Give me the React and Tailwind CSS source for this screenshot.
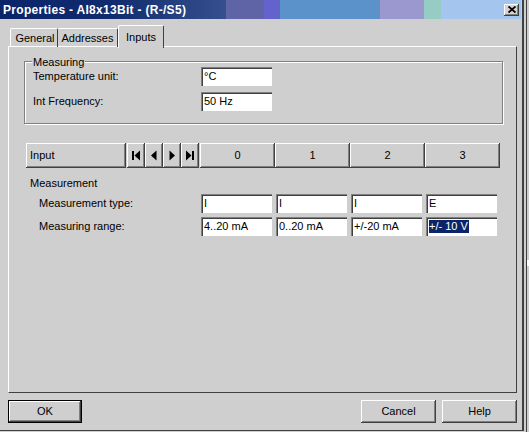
const raised =
  "shadow-[inset_-1px_-1px_#404040,inset_1px_1px_#ffffff,inset_-2px_-2px_#808080]";
const sunken =
  "shadow-[inset_1px_1px_#808080,inset_2px_2px_#404040,inset_-1px_-1px_#ffffff]";

function Field({ value, w = "w-[71px]", selected }) {
  return (
    <div className={`${w} h-[19px] bg-white ${sunken} flex items-center pl-[3px] text-black`}>
      {selected ? (
        <span className="bg-[#0a246a] text-white leading-[13px] pr-[1px]">{value}</span>
      ) : (
        value
      )}
    </div>
  );
}

function NavIcon({ kind }) {
  return (
    <svg width="10" height="11" viewBox="0 0 10 11">
      {kind === "first" && (
        <>
          <rect x="1" y="1" width="2" height="9" fill="#000" />
          <polygon points="9,0.5 3.5,5.5 9,10.5" fill="#000" />
        </>
      )}
      {kind === "prev" && <polygon points="7.5,0.5 2,5.5 7.5,10.5" fill="#000" />}
      {kind === "next" && <polygon points="2.5,0.5 8,5.5 2.5,10.5" fill="#000" />}
      {kind === "last" && (
        <>
          <polygon points="1,0.5 6.5,5.5 1,10.5" fill="#000" />
          <rect x="7" y="1" width="2" height="9" fill="#000" />
        </>
      )}
    </svg>
  );
}

function Button({ label, w = "w-[75px]", def }) {
  return (
    <div
      className={`${w} h-[23px] flex items-center justify-center text-black ${
        def ? "border border-black" : ""
      }`}
    >
      <div className={`w-full h-full flex items-center justify-center ${raised}`}>{label}</div>
    </div>
  );
}

export default function App() {
  return (
    <div
      className="w-[529px] h-[432px] bg-[#cfcfcf] flex overflow-hidden text-[11px] text-black"
      style={{ fontFamily: '"Liberation Sans", Arial, sans-serif' }}
    >
      <div className="w-[524px] h-[431px] flex flex-col border-r-2 border-b border-r-[#404040] border-b-[#404040] shrink-0">
        {/* title bar */}
        <div className="h-[19px] w-[521px] flex items-center relative shrink-0">
          <div className="absolute inset-0 flex">
            <div className="w-[226px] bg-gradient-to-r from-[#0a246a] via-[#102c6e] to-[#36508e]" />
            <div className="w-[38px] bg-[#5e64a6]" />
            <div className="w-[16px] bg-[#6462cc]" />
            <div className="w-[100px] bg-[#5b92c9]" />
            <div className="w-[44px] bg-[#9a98ce]" />
            <div className="w-[17px] bg-[#96ccc4]" />
            <div className="flex-1 bg-[#a4c6ee]" />
          </div>
          <span className="relative ml-[3px] text-white font-bold text-[12px] tracking-[0.3px]">
            Properties - AI8x13Bit - (R-/S5)
          </span>
          <div
            className={`relative ml-auto mr-[2px] w-[15px] h-[12px] bg-[#d4d4d4] ${raised} flex items-center justify-center`}
          >
            <svg width="8" height="7" viewBox="0 0 8 7">
              <path d="M0.5 0.5 L7.5 6.5 M7.5 0.5 L0.5 6.5" stroke="#000" strokeWidth="1.8" />
            </svg>
          </div>
        </div>

        {/* tabs */}
        <div className="flex items-end h-[21px] pl-[10px] shrink-0 mt-[6px] relative z-10">
          <div className="h-[19px] w-[48px] flex items-center justify-center pl-[2px] border-t border-l border-white border-r border-r-[#404040] rounded-t-[2px] mb-[-1px]">
            General
          </div>
          <div className="h-[19px] w-[60px] flex items-center justify-center border-t border-white border-r border-r-[#404040] rounded-t-[2px] mb-[-1px]">
            Addresses
          </div>
          <div className="h-[23px] w-[46px] flex items-start pt-[3px] justify-center border-t border-l border-white border-r border-r-[#404040] rounded-t-[2px] bg-[#cfcfcf] mb-[-2px]">
            Inputs
          </div>
        </div>

        {/* panel */}
        <div className="ml-[8px] w-[509px] h-[347px] border-t border-l border-white border-r border-b border-r-[#404040] border-b-[#404040] shrink-0 flex flex-col">
          {/* Measuring group */}
          <div className="ml-[15px] mt-[14px] w-[479px] h-[63px] border border-[#808080] shadow-[1px_1px_#ffffff,inset_1px_1px_#ffffff] relative flex flex-col gap-[6px] pt-[5px]">
            <span className="absolute left-[7px] top-[-8px] bg-[#cfcfcf] px-[1px]">Measuring</span>
            <div className="flex items-center">
              <span className="w-[176px] pl-[8px]">Temperature unit:</span>
              <Field value="°C" />
            </div>
            <div className="flex items-center">
              <span className="w-[176px] pl-[8px]">Int Frequency:</span>
              <Field value="50 Hz" />
            </div>
          </div>

          {/* header row */}
          <div className="ml-[17px] mt-[19px] flex h-[25px]">
            <div className={`w-[100px] h-full ${raised} flex items-center pl-[4px]`}>Input</div>
            <div className="w-[74px] h-full flex pl-[1px]">
              {["first", "prev", "next", "last"].map((k) => (
                <div key={k} className={`w-[18px] h-full ${raised} flex items-center justify-center`}>
                  <NavIcon kind={k} />
                </div>
              ))}
            </div>
            {["0", "1", "2", "3"].map((c) => (
              <div key={c} className={`w-[75px] h-full ${raised} flex items-center justify-center`}>
                {c}
              </div>
            ))}
          </div>

          <div className="ml-[21px] mt-[9px] leading-[13px]">Measurement</div>

          <div className="mt-[4px] flex flex-col gap-[4px]">
            <div className="flex items-center">
              <span className="w-[192px] pl-[30px]">Measurement type:</span>
              <div className="flex gap-[4px]">
                <Field value="I" />
                <Field value="I" />
                <Field value="I" />
                <Field value="E" />
              </div>
            </div>
            <div className="flex items-center">
              <span className="w-[192px] pl-[30px]">Measuring range:</span>
              <div className="flex gap-[4px]">
                <Field value="4..20 mA" />
                <Field value="0..20 mA" />
                <Field value="+/-20 mA" />
                <Field value="+/- 10 V" selected />
              </div>
            </div>
          </div>
        </div>

        {/* buttons */}
        <div className="flex mt-[7px] pl-[8px] pr-[5px] shrink-0">
          <Button label="OK" w="w-[74px]" def />
          <div className="ml-auto flex gap-[6px]">
            <Button label="Cancel" />
            <Button label="Help" />
          </div>
        </div>
      </div>

      {/* background window strip */}
      <div className="flex-1 flex pl-[1px] relative">
        <div className="w-[1px] h-full bg-[#404040] ml-[1px]" />
        <div className="absolute left-[3px] top-[260px] w-[3px] h-[6px] bg-white" />
      </div>
    </div>
  );
}
